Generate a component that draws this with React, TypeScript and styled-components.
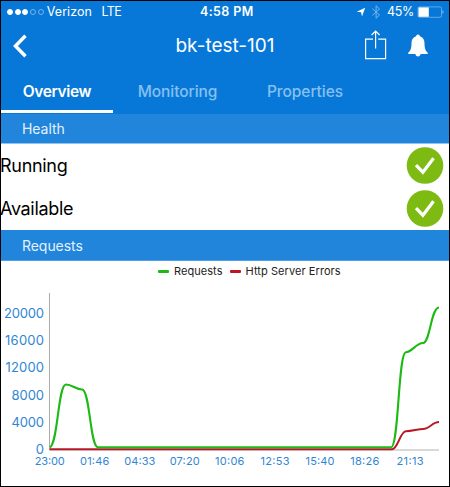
import React from "react";
import styled, { createGlobalStyle } from "styled-components";

const GlobalStyle = createGlobalStyle`
  *, *::before, *::after { box-sizing: border-box; }
  body { margin: 0; background: #fff; font-family: Inter, "Liberation Sans", sans-serif; }
  svg { display: block; flex: none; }
`;

const Screen = styled.main`
  width: 450px;
  height: 487px;
  border: 1px solid #000;
  background: #fff;
  overflow: hidden;
  display: flex;
  flex-direction: column;
`;

const TopArea = styled.header`
  flex: none;
  height: 113px;
  background: #0778d7;
  color: #fff;
  display: flex;
  flex-direction: column;
`;

const StatusBar = styled.div`
  height: 21px;
  display: grid;
  grid-template-columns: 193px 1fr auto;
  align-items: center;
  padding: 0 4px 0 6px;
  line-height: 21px;
`;

const StatusGroup = styled.div`
  display: flex;
  align-items: center;
`;

const Dots = styled.div`
  display: flex;
  gap: 1.7px;
  margin-right: 3px;
`;

const Dot = styled.i<{ $on?: boolean }>`
  width: 6px;
  height: 6px;
  border-radius: 50%;
  border: 1px solid ${(p) => (p.$on ? "#fff" : "#72b4ec")};
  background: ${(p) => (p.$on ? "#fff" : "transparent")};
`;

const StatusText = styled.span<{ $weight?: number; $track?: number; $gap?: number }>`
  font-size: 12.5px;
  font-weight: ${(p) => p.$weight ?? 400};
  letter-spacing: ${(p) => p.$track ?? 0}px;
  margin-left: ${(p) => p.$gap ?? 0}px;
  white-space: nowrap;
`;

const NavBar = styled.div`
  height: 48px;
  display: grid;
  grid-template-columns: 84px 1fr 84px;
  align-items: center;
`;

const BackButton = styled.button`
  border: 0;
  background: none;
  padding: 0 0 0 11px;
  color: inherit;
`;

const Title = styled.h1`
  margin: 0;
  font-size: 19px;
  font-weight: 400;
  line-height: 24px;
  text-align: center;
  white-space: nowrap;
`;

const Actions = styled.div`
  display: flex;
  align-items: center;
  gap: 20px;
  padding-bottom: 2px;
`;

const Tabs = styled.nav`
  height: 44px;
  display: grid;
  grid-template-columns: 112px 129px 126px;
`;

const Tab = styled.a<{ $active?: boolean; $track: number }>`
  font-size: 15.5px;
  font-weight: ${(p) => (p.$active ? 600 : 500)};
  letter-spacing: ${(p) => p.$track}px;
  color: ${(p) => (p.$active ? "#fff" : "#86c0f1")};
  line-height: 44px;
  text-align: center;
  white-space: nowrap;
  height: 43px;
  border-bottom: 3px solid ${(p) => (p.$active ? "#fff" : "transparent")};
`;

const SectionBand = styled.h2<{ $height: number; $edge?: string }>`
  flex: none;
  margin: 0;
  height: ${(p) => p.$height}px;
  line-height: ${(p) => p.$height}px;
  padding-left: 21px;
  background: #2185dc;
  border-bottom: 1px solid ${(p) => p.$edge ?? "#4f9fe3"};
  color: #e4f1fc;
  font-size: 14px;
  font-weight: 400;
  letter-spacing: -0.05px;
`;

const HealthRow = styled.div<{ $height: number; $track: number }>`
  flex: none;
  height: ${(p) => p.$height}px;
  display: flex;
  align-items: center;
  justify-content: space-between;
  padding-right: 5px;
  color: #000;
  font-size: 18px;
  letter-spacing: ${(p) => p.$track}px;
`;

const RowLabel = styled.span`
  margin-left: -1px;
`;

const Legend = styled.div`
  display: flex;
  align-items: center;
  height: 20px;
  padding-left: 157px;
  gap: 5px;
`;

const Swatch = styled.i<{ $color: string }>`
  width: 11px;
  height: 3px;
  border-radius: 1px;
  background: ${(p) => p.$color};
`;

const LegendLabel = styled.span<{ $track: number }>`
  font-size: 11px;
  letter-spacing: ${(p) => p.$track}px;
  color: #222;
  margin-right: 2px;
  white-space: nowrap;
`;

const Chart = styled.svg`
  font-family: Inter, "Liberation Sans", sans-serif;
  fill: #2f86d4;
`;

const yTicks = [
  { label: "20000", y: 313, w: 40 },
  { label: "16000", y: 340, w: 39 },
  { label: "12000", y: 367.3, w: 38.5 },
  { label: "8000", y: 394.5, w: 32.5 },
  { label: "4000", y: 421.5, w: 32.5 },
  { label: "0", y: 448.5, w: 8 },
];

const xTicks = [
  { label: "23:00", x: 49.7, w: 30 },
  { label: "01:46", x: 94.7, w: 29.5 },
  { label: "04:33", x: 139.8, w: 31 },
  { label: "07:20", x: 184.7, w: 30 },
  { label: "10:06", x: 229.7, w: 29.5 },
  { label: "12:53", x: 275, w: 29 },
  { label: "15:40", x: 320, w: 29 },
  { label: "18:26", x: 364.8, w: 29 },
  { label: "21:13", x: 410, w: 27 },
];

const StatusCheck = () => (
  <svg width="38" height="38" viewBox="0 0 38 38">
    <circle cx="19" cy="19.5" r="18.3" fill="#7dbb12" />
    <path d="M10 19.1 16.9 26.2 27.5 12.2" fill="none" stroke="#fff" strokeWidth="3.2" />
  </svg>
);

export default function App() {
  return (
    <>
      <GlobalStyle />
      <Screen>
        <TopArea>
          <StatusBar>
            <StatusGroup>
              <Dots>
                <Dot $on />
                <Dot $on />
                <Dot $on />
                <Dot />
                <Dot />
              </Dots>
              <StatusText $track={0.05}>Verizon</StatusText>
              <StatusText $gap={9.5} $track={-0.5}>LTE</StatusText>
            </StatusGroup>
            <StatusText $weight={600} $track={0.4}>4:58 PM</StatusText>
            <StatusGroup>
              <svg width="10" height="10" viewBox="0 0 10 10">
                <path d="M9.2.8 6 9.6 5.1 5.2.7 4.8Z" fill="#fff" />
              </svg>
              <svg width="21" height="14" viewBox="0 0 21 14">
                <path d="M6.3 3.6 13.5 10 10.1 13.2V.8L13.5 4 6.3 10.4" fill="none" stroke="#79b5e9" />
              </svg>
              <StatusText $track={-0.3}>45%</StatusText>
              <svg width="31" height="12" viewBox="0 0 31 12">
                <rect x="4" y=".9" width="23.5" height="10.4" rx="1.5" fill="none" stroke="#5fa9e7" />
                <path d="M4.5 1.4h10.3v9.4H4.5z" fill="#fff" />
                <path d="M28.6 4.3c1.2.6 1.2 2.9 0 3.5z" fill="#b9daf5" />
              </svg>
            </StatusGroup>
          </StatusBar>
          <NavBar>
            <BackButton aria-label="Back">
              <svg width="16" height="24" viewBox="0 0 16 24">
                <path d="M13.5 1.8 3.5 12 13.5 22.2" fill="none" stroke="#fff" strokeWidth="3.5" />
              </svg>
            </BackButton>
            <Title>bk-test-101</Title>
            <Actions>
              <svg width="22" height="30" viewBox="0 0 22 30">
                <path d="M8 9.2H.6V28.6h20V9.2h-7.4M10.6 18.5V1M6.6 5 10.6 1l4 4" fill="none" stroke="#fff" strokeWidth="1.2" />
              </svg>
              <svg width="22" height="23" viewBox="0 0 22 23">
                <path d="M11 .5c-1.1 0-1.8.7-1.8 1.8C6 3.1 4.5 5.7 4.5 9.2c0 5.6-1.3 7.7-3.2 9.3V20h7.1c.2 1.6 1.2 2.5 2.6 2.5s2.4-.9 2.6-2.5h7.1v-1.5c-1.9-1.6-3.2-3.7-3.2-9.3 0-3.5-1.5-6.1-4.7-6.9C12.8 1.2 12.1.5 11 .5Z" fill="#fff" />
              </svg>
            </Actions>
          </NavBar>
          <Tabs>
            <Tab $active $track={-0.38}>Overview</Tab>
            <Tab $track={-0.05}>Monitoring</Tab>
            <Tab $track={-0.05}>Properties</Tab>
          </Tabs>
        </TopArea>
        <SectionBand $height={30} $edge="#90c3ee">Health</SectionBand>
        <HealthRow $height={42} $track={-0.3}>
          <RowLabel>Running</RowLabel>
          <StatusCheck />
        </HealthRow>
        <HealthRow $height={44} $track={-0.32}>
          <RowLabel>Available</RowLabel>
          <StatusCheck />
        </HealthRow>
        <SectionBand $height={31}>Requests</SectionBand>
        <Legend>
          <Swatch $color="#1db914" />
          <LegendLabel $track={0.05}>Requests</LegendLabel>
          <Swatch $color="#bd1622" />
          <LegendLabel $track={0.07}>Http Server Errors</LegendLabel>
        </Legend>
        <Chart width="448" height="205" viewBox="1 281 448 205">
          <path d="M49.5 293V449.5" stroke="#aaa" />
          <path d="M49.5 450H439" stroke="#ccc" strokeWidth="1.4" />
          <path
            d="M49.5 449.3H392C398 449.3 400 431.2 406 431.2C412 431.2 418 429 423 429C430 429 432 422 439 422"
            fill="none"
            stroke="#b71a26"
            strokeWidth="1.9"
          />
          <path
            d="M50 447.3C58 443 58 384.5 66 384.5C72 384.5 76 389.5 82 389.5C90 389.5 90 447.3 98 447.3H391C399 447.3 398 352.2 406 352.2C412 352.2 416 343 423 343C430 343 431 307.5 439 307.5"
            fill="none"
            stroke="#1db914"
            strokeWidth="2.1"
          />
          {yTicks.map((t) => (
            <text key={t.label} x="44" y={t.y + 5} textAnchor="end" fontSize="13" textLength={t.w}>
              {t.label}
            </text>
          ))}
          {xTicks.map((t) => (
            <text key={t.label} x={t.x} y="465" textAnchor="middle" fontSize="11" textLength={t.w}>
              {t.label}
            </text>
          ))}
        </Chart>
      </Screen>
    </>
  );
}
